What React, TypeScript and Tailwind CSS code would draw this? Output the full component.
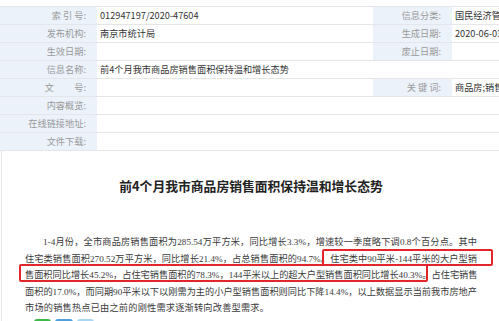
import React from "react";

const labelCls =
  "bg-[#ebf2fa] text-[#9a9a9a] text-right pr-[11px] border-b border-[#e3e6ea] flex items-center justify-end whitespace-nowrap";
const valueCls =
  "text-[#333] pl-[3px] border-b border-[#e6e6e6] flex items-center whitespace-nowrap overflow-hidden";

function Label({ children }: { children: React.ReactNode }) {
  return <div className={labelCls}>{children}</div>;
}
function Value({ children, span }: { children?: React.ReactNode; span?: boolean }) {
  return <div className={valueCls + (span ? " col-span-3" : "")}>{children}</div>;
}

const lines = [
  "1-4月份，全市商品房销售面积为285.54万平方米，同比增长3.3%，增速较一季度略下调0.8个百分点。其中",
  "住宅类销售面积270.52万平方米，同比增长21.4%，占总销售面积的94.7%。住宅类中90平米-144平米的大户型销",
  "售面积同比增长45.2%，占住宅销售面积的78.3%，144平米以上的超大户型销售面积同比增长40.3%。占住宅销售",
  "面积的17.0%，而同期90平米以下以刚需为主的小户型销售面积则同比下降14.4%，以上数据显示当前我市房地产",
];

export default function App() {
  return (
    <div
      className="relative w-[499px] h-[321px] overflow-hidden bg-white"
      style={{ fontFamily: '"Noto Sans CJK SC", "Liberation Sans", sans-serif' }}
    >
      <div className="h-[6px]" />
      <div className="grid grid-cols-[97px_276px_79px_1fr] grid-rows-[repeat(8,18px)] border-t border-[#e3e6ea] text-[9.2px] leading-none">
        <Label>索 引 号:</Label>
        <Value>012947197/2020-47604</Value>
        <Label>信息分类:</Label>
        <Value>国民经济管理</Value>

        <Label>发布机构:</Label>
        <Value>南京市统计局</Value>
        <Label>生成日期:</Label>
        <Value>2020-06-03</Value>

        <Label>生效日期:</Label>
        <Value />
        <Label>废止日期:</Label>
        <Value />

        <Label>信息名称:</Label>
        <Value span>前4个月我市商品房销售面积保持温和增长态势</Value>

        <Label>文&emsp;&emsp; 号:</Label>
        <Value />
        <Label>关 键 词:</Label>
        <Value>商品房;销售</Value>

        <Label>内容概览:</Label>
        <Value span />

        <Label>在线链接地址:</Label>
        <Value span />

        <Label>文件下载:</Label>
        <Value span />
      </div>

      <div className="border-l border-[#e4e4e4] ml-[1px] h-[171px] pl-[23px] pr-[22px]">
        <div className="pt-[26px] h-[83px] text-center text-[12.8px] leading-[18px] font-bold text-[#222]">
          前4个月我市商品房销售面积保持温和增长态势
        </div>
        <div
          className="text-[9.2px] leading-[16.5px] text-[#3a3a3a]"
          style={{ fontFamily: '"Liberation Serif", "Noto Sans CJK SC", serif' }}
        >
          {lines.map((l, i) => (
            <div
              key={i}
              className={
                "whitespace-nowrap text-justify [text-align-last:justify]" + (i === 0 ? " pl-[18px]" : "")
              }
            >
              {l}
            </div>
          ))}
          <div className="whitespace-nowrap tracking-[0.2px]">市场的销售热点已由之前的刚性需求逐渐转向改善型需求。</div>
        </div>
        <div className="flex gap-[4px] ml-[9px] mt-[2px]">
          <div className="w-[17px] h-[12px] rounded-[3px] bg-[#3fb84a]" />
          <div className="w-[18px] h-[12px] rounded-[3px] bg-[#4f9fdc]" />
          <div className="w-[17px] h-[12px] rounded-[3px] bg-[#a9d6f2]" />
        </div>
      </div>

      <div className="absolute left-[322px] top-[249px] w-[171px] h-[17px] border-2 border-[#e3262c] rounded-[2px]" />
      <div className="absolute left-[19px] top-[264px] w-[409px] h-[18px] border-2 border-[#e3262c] rounded-[2px]" />
    </div>
  );
}
